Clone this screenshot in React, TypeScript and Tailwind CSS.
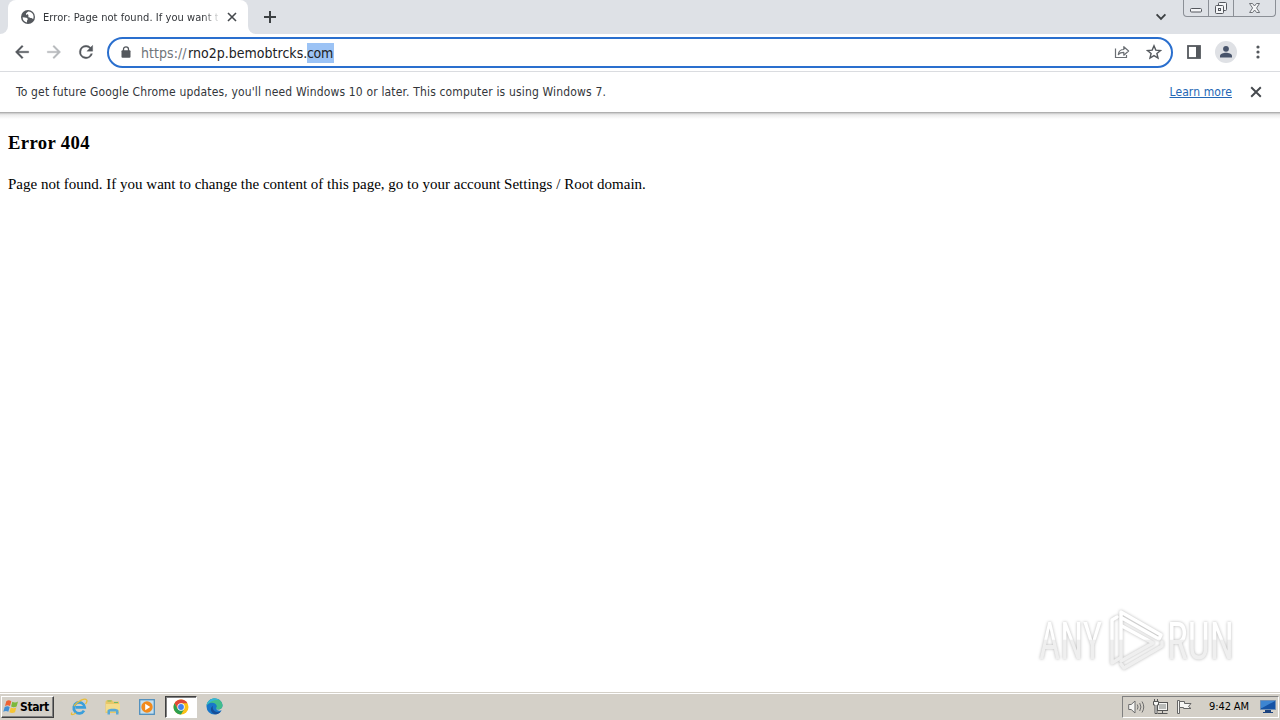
import type { ReactNode } from "react";

const TAHOMA = "font-['DejaVu_Sans_Condensed','DejaVu_Sans',sans-serif] [font-stretch:condensed]";

function GlobeIcon() {
  return (
    <svg width="16" height="16" viewBox="0 0 16 16" className="shrink-0">
      <circle cx="8" cy="8" r="7" fill="#54585d" />
      <path d="M2.6 8.2 5 8.6c1 .2 2.5.2 2.7 1.3.2 1-.7 1.2-.7 2.2v1.3A5.6 5.6 0 0 1 2.6 8.2Z" fill="#fff" />
      <path d="M8.2 2.5c2.5 0 4.3 1.4 5 3.3.6 1.5.4 3.2 0 4.2-.8-.2-1-.8-1.8-1-1.1-.2-2.2.2-2.8-.7-.6-1 .2-2-.4-2.5-.7-.4-2 .1-2.2-.7-.3-.9 1-1.2 2.2-2.6Z" fill="#fff" />
    </svg>
  );
}

function CloseIcon({ size }: { size: number }) {
  return (
    <svg width={size} height={size} viewBox="0 0 10 10" className="shrink-0" stroke="#45494d" strokeWidth="1.6">
      <path d="M1 1l8 8M9 1l-8 8" />
    </svg>
  );
}

function WindowControls() {
  return (
    <div className="flex h-[17px] w-[93px] shrink-0 rounded-b-[4px] border border-t-0 border-[#8b8f96] bg-[#dee1e6]">
      <div className="w-[25px] border-r border-[#8b8f96]">
        <svg width="24" height="16" viewBox="0 0 24 16" fill="#f4f5f7" stroke="#54575d">
          <rect x="6.5" y="8.5" width="11" height="3.5" rx="1" />
        </svg>
      </div>
      <div className="w-[25px] border-r border-[#8b8f96]">
        <svg width="24" height="16" viewBox="0 0 24 16" fill="#f4f5f7" stroke="#54575d">
          <rect x="9.5" y="2.5" width="8" height="8" rx="1" />
          <rect x="6.5" y="5.5" width="8" height="8" rx="1" />
          <rect x="9.5" y="8.5" width="2" height="2" />
        </svg>
      </div>
      <svg width="41" height="16" viewBox="0 0 41 16" fill="#f4f5f7" stroke="#62656b" strokeWidth=".9">
        <path d="M15.5 3.5h3l2 2.5 2-2.5h3L22.6 8l3 4.5h-3l-2-2.5-2 2.5h-3l3-4.5Z" />
      </svg>
    </div>
  );
}

function TabStrip() {
  return (
    <div className="flex h-[34px] bg-[#dee1e6]">
      <div className="flex w-2 items-end bg-white">
        <div className="h-[34px] w-2 rounded-br-[8px] bg-[#dee1e6]" />
      </div>
      <div className="flex h-[34px] w-[240px] items-center rounded-t-[8px] bg-white pl-3">
        <GlobeIcon />
        <div className="ml-[7px] w-[175px] overflow-hidden pt-px text-[11px] leading-[16px] whitespace-nowrap text-[#33363a] [mask-image:linear-gradient(to_right,black_160px,transparent_178px)]">
          <span className="tracking-[0.06px]">Error: Page not found. If you want t</span>
        </div>
        <div className="ml-[9px] flex">
          <CloseIcon size={10} />
        </div>
      </div>
      <div className="w-2 bg-white">
        <div className="h-[34px] w-2 rounded-bl-[8px] bg-[#dee1e6]" />
      </div>
      <svg width="12" height="12" viewBox="0 0 12 12" className="mt-[11px] ml-2" stroke="#3c4043" strokeWidth="2">
        <path d="M6 0v12M0 6h12" />
      </svg>
      <div className="flex-1" />
      <svg width="12" height="8" viewBox="0 0 12 8" className="mt-[13px] mr-4" fill="none" stroke="#3c4043" strokeWidth="1.9">
        <path d="m1.6 1.4 4.4 4.4 4.4-4.4" />
      </svg>
      <WindowControls />
      <div className="w-1" />
    </div>
  );
}

function ToolbarIcon({ d, color = "#54585d", className = "" }: { d: string; color?: string; className?: string }) {
  return (
    <svg
      width="20"
      height="20"
      viewBox="0 0 24 24"
      fill={color}
      stroke={color}
      strokeWidth=".4"
      className={`mb-px shrink-0 ${className}`}
    >
      <path d={d} />
    </svg>
  );
}

function Omnibox() {
  return (
    <div className="ml-[11px] flex h-[31px] w-[1066px] items-center rounded-full border-2 border-[#2a6fce] bg-white">
      <svg width="10" height="12" viewBox="0 0 10 12" className="mb-px ml-3">
        <path d="M2.5 5V3.3a2.5 2.5 0 0 1 5 0V5" fill="none" stroke="#54585d" strokeWidth="1.3" />
        <rect x=".5" y="4.3" width="9" height="7.4" rx="1" fill="#54585d" />
      </svg>
      <div className="ml-[10px] flex h-5 text-[14px] leading-[20px] whitespace-nowrap text-[#202124]">
        <span className="w-[47px] tracking-[0.05px] text-[#70757a]">https://</span>
        <span className="w-[119px] tracking-[0.02px]">rno2p.bemobtrcks.</span>
        <span className="w-[27px] bg-[#9cc3f5] tracking-[-0.3px]">com</span>
      </div>
      <div className="flex-1" />
      <svg width="16" height="16" viewBox="0 0 16 16" className="mr-4 mb-px" fill="none" stroke="#6b6f74" strokeWidth="1.2">
        <path d="M1.5 4.5v9h11V11" />
        <path d="M4.3 10.5c.4-3.2 2.2-5 5.5-5V2.7l4.8 4.3-4.8 4.2V8.4c-2.6 0-4.2.5-5.5 2.1Z" strokeLinejoin="round" />
      </svg>
      <svg width="16" height="16" viewBox="0 0 16 16" className="mr-[9px] mb-px" fill="none" stroke="#54585d" strokeWidth="1.4">
        <path d="m8 1.8 1.8 4.3 4.7.4-3.6 3 1.1 4.6L8 11.6l-4 2.5 1.1-4.6-3.6-3 4.7-.4Z" />
      </svg>
    </div>
  );
}

function Toolbar() {
  return (
    <div className="flex h-[38px] items-center border-b border-[#dadce0] bg-white pl-3">
      <ToolbarIcon d="M20 11H7.83l5.59-5.59L12 4l-8 8 8 8 1.41-1.41L7.83 13H20v-2z" />
      <ToolbarIcon d="m12 4-1.41 1.41L16.17 11H4v2h12.17l-5.58 5.59L12 20l8-8z" color="#b6b9bc" className="ml-3" />
      <ToolbarIcon
        d="M17.65 6.35A7.96 7.96 0 0 0 12 4a8 8 0 1 0 7.73 10h-2.08A6 6 0 1 1 12 6c1.66 0 3.14.69 4.22 1.78L13 11h7V4l-2.35 2.35z"
        className="ml-3"
      />
      <Omnibox />
      <svg width="14" height="14" viewBox="0 0 14 14" className="mb-px ml-[14px]">
        <rect x="1" y="1" width="12" height="12" fill="none" stroke="#54585d" strokeWidth="1.8" />
        <rect x="9" y="1" width="4" height="12" fill="#54585d" />
      </svg>
      <svg width="22" height="22" viewBox="0 0 22 22" className="mb-px ml-[14px]">
        <circle cx="11" cy="11" r="11" fill="#dfe1e5" />
        <circle cx="11" cy="7.8" r="2.9" fill="#48546b" />
        <path d="M5 16.5v-1.4c0-2.2 3.5-3.3 6-3.3s6 1.1 6 3.3v1.4Z" fill="#48546b" />
      </svg>
      <svg width="4" height="14" viewBox="0 0 4 14" className="mb-px ml-[19px]" fill="#54585d">
        <circle cx="2" cy="2" r="1.6" />
        <circle cx="2" cy="7" r="1.6" />
        <circle cx="2" cy="12" r="1.6" />
      </svg>
    </div>
  );
}

function InfoBar() {
  return (
    <div className="flex h-10 items-center bg-white pr-[18px] pl-4 text-[12px] leading-[16px] whitespace-nowrap text-[#33363a]">
      <span className="tracking-[0.16px]">
        To get future Google Chrome updates, you'll need Windows 10 or later. This computer is using Windows 7.
      </span>
      <div className="flex-1" />
      <a className="mr-[18px] tracking-[0.1px] text-[#2467b5] underline">Learn more</a>
      <CloseIcon size={12} />
    </div>
  );
}

function Watermark() {
  return (
    <svg
      width="210"
      height="72"
      viewBox="0 0 210 72"
      className="absolute top-[492px] left-[1033px] overflow-visible [filter:drop-shadow(0_0_1.5px_#b8b8b8)]"
    >
      <defs>
        <linearGradient id="mark" x1="0" y1="0" x2="0" y2="72" gradientUnits="userSpaceOnUse">
          <stop offset=".49" stopColor="#ffffff" />
          <stop offset=".5" stopColor="#efefef" />
        </linearGradient>
      </defs>
      <g fill="url(#mark)" fontFamily="Roboto, sans-serif" fontSize="51" fontWeight="400">
        <text x="6" y="55" textLength="63" lengthAdjust="spacingAndGlyphs">ANY</text>
        <text x="134" y="55" textLength="67" lengthAdjust="spacingAndGlyphs">RUN</text>
      </g>
      <g fill="none" stroke="url(#mark)" strokeWidth="3.5" strokeLinejoin="round" strokeLinecap="round">
        <path d="M84 13 79 16v43l8-5" />
        <path d="M88 54V8l40 23-2 4-37-21" />
        <path d="M89 22l31 17-32 18" />
        <path d="M129 38v4L91 64l-3-4" />
      </g>
    </svg>
  );
}

function StartButton() {
  return (
    <button className="ml-px flex h-[22px] w-[53px] items-center border border-t-white border-r-[#404040] border-b-[#404040] border-l-white bg-[#d4d0c8] pl-px shadow-[inset_-1px_-1px_0_#808080]">
      <svg width="17" height="17" viewBox="0 0 17 17" className="shrink-0">
        <path d="M3.3 3.2c2-1.3 3.3-1 5 0L7 8C5.3 7 4 7 2 8Z" fill="#ee6334" />
        <path d="M9.3 3.7c1.9 1 3.6 1 5.7-.1l-1.4 4.9c-2 1-3.8 1-5.5 0Z" fill="#7cb83c" />
        <path d="M1.7 9c2-1.2 3.5-1 5 0l-1.4 4.8c-1.6-1-3.1-1-5 0Z" fill="#418fd5" />
        <path d="M7.8 9.5c1.9 1 3.6.9 5.5 0l-1.3 4.7c-2 1.1-4 1-5.6 0Z" fill="#f6c535" />
      </svg>
      <span className="text-[12px] leading-[16px] font-bold tracking-[-0.4px] text-black">Start</span>
    </button>
  );
}

function TaskItem({ children, active = false }: { children: ReactNode; active?: boolean }) {
  if (active) {
    return (
      <div className="flex h-[22px] w-[32px] items-center justify-center border border-t-[#404040] border-r-white border-b-white border-l-[#404040] bg-white shadow-[inset_1px_1px_0_#808080]">
        {children}
      </div>
    );
  }
  return <div className="flex h-[22px] w-[32px] items-center justify-center">{children}</div>;
}

function ExplorerE() {
  return (
    <svg width="18" height="18" viewBox="0 0 18 18" fill="none">
      <path d="M14 12.6a5.5 5.5 0 1 1 .7-3.3H5.5" stroke="#3b9fdb" strokeWidth="2.7" />
      <path d="M2 14.5C0 17.500 3 17 6 15M4 8c4-5 11-8.500 12.700-6 .7 1-.2 2.700-1.200 4" stroke="#e8bd39" strokeWidth="1.3" />
    </svg>
  );
}

function FolderIcon() {
  return (
    <svg width="18" height="18" viewBox="0 0 18 18">
      <path d="M1.5 3.5 3 2h5l1 1.5h6V15h-13.5Z" fill="#e9c766" />
      <path d="M3.5 3h4M10 4.5h4" stroke="#72b967" strokeWidth="1.2" />
      <path d="M2 6h14v7.5H2Z" fill="#f3dc8b" />
      <path d="M3.5 16.5v-4c0-2.5 11-2.5 11 0v4H12v-3H6v3Z" fill="#58a9d6" />
    </svg>
  );
}

function MediaIcon() {
  return (
    <svg width="16" height="16" viewBox="0 0 16 16">
      <rect x=".7" y=".7" width="14.6" height="14.6" fill="#c5dfef" stroke="#4f8fbe" strokeWidth="1.3" />
      <circle cx="8" cy="8" r="5.7" fill="#f28a1c" />
      <path d="m6.2 4.7 5 3.3-5 3.3Z" fill="#fff" />
    </svg>
  );
}

function ChromeIcon() {
  return (
    <svg width="16" height="16" viewBox="0 0 16 16">
      <circle cx="8" cy="8" r="7.5" fill="#fbc116" />
      <path d="M8 8 4.7 9.9 1.5 4.3A7.5 7.5 0 0 1 14.5 4.3H8Z" fill="#df4939" />
      <path d="M1.5 4.3A7.5 7.5 0 0 0 8 15.5l3.2-5.6H4.7Z" fill="#2b9f50" />
      <circle cx="8" cy="8" r="3.7" fill="#fff" />
      <circle cx="8" cy="8" r="2.9" fill="#4382ed" />
    </svg>
  );
}

function EdgeIcon() {
  return (
    <svg width="17" height="17" viewBox="0 0 17 17" className="mr-[2px]">
      <path d="M.5 8.5C.5 4 4 .5 8.5.5c5 0 8 3.6 8 7 0 2.7-2 4-4.2 4-1 0-1.8-.3-2.1-.7.8 1.7 2.9 2.3 5.5 1.5-1.3 2.5-4 4.2-7.2 4.2a8 8 0 0 1-8-8Z" fill="#1876c9" />
      <path d="M.6 7.5C1.4 2.9 5 .5 8.5.5c5 0 8 3.6 8 7 0 2.7-2 4-4.2 4-1.3 0-2.4-.5-2.3-1.2.1-.6.8-.8.8-2C10.8 6 8.3 4.5 5.7 4.7 3.3 4.9 1.6 6 .6 7.5Z" fill="#42bd8b" />
      <path d="M.6 7.5C1.4 2.9 5 .5 8.5.5c2 0 3.6.6 4.9 1.6-5.4-.3-9.6 1-12.8 5.4Z" fill="#35b6d8" />
      <path d="M7 7.8c-1.5 4.4 3.2 7.3 7.7 5.6-2.9 4.5-8.8 3-9.7-1-.4-1.9.4-3.7 2-4.6Z" fill="#174e98" />
    </svg>
  );
}

function Tray() {
  return (
    <div className="flex h-[22px] w-[157px] items-center border border-t-[#808080] border-r-white border-b-white border-l-[#808080] pl-[5px]">
      <svg width="17" height="16" viewBox="0 0 17 16" fill="#f6f6f4" stroke="#6c6c6c">
        <path d="M.7 5.5h2.5L7 2v12l-3.8-3.5H.7Z" />
        <path d="M9.3 5.5q1.5 2.5 0 5M11.7 4q2.5 4 0 8M14 2.5q3.5 5.5 0 11" fill="none" />
      </svg>
      <svg width="17" height="16" viewBox="0 0 17 16" className="ml-[7px]" fill="#f6f6f4" stroke="#555">
        <rect x="5.5" y="3.5" width="10" height="8" />
        <rect x="7" y="5" width="7" height="5" fill="#b9bbb9" stroke="none" />
        <path d="M10.5 11.5v3M5.500 14.500h10" />
        <path d="M1.5 2.5h5V6H5v8.5H3V6H1.5ZM2.5 0v2M5.5 0v2" />
      </svg>
      <svg width="17" height="16" viewBox="0 0 17 16" className="ml-[7px]" fill="#f6f6f4" stroke="#666">
        <path d="M1.5 1.5h2v13h-2Z" />
        <path d="M3.5 2.5h5v2h6.5l-2.5 3 2.5 2H7.5v-1h-4Z" />
      </svg>
      <span className="ml-[16px] w-[44px] text-[11px] leading-[14px] tracking-[-0.1px] whitespace-nowrap text-black">9:42 AM</span>
      <svg width="16" height="15" viewBox="0 0 16 15" className="ml-[7px] shrink-0">
        <path d="M.5 1.5h15v9H.5Z" fill="#1553a5" stroke="#7190b5" />
        <path d="M1 2h14L2 9H1Z" fill="#3d85d1" />
        <path d="M5 11h6v2h2v1H3v-1h2Z" fill="#1b437e" />
      </svg>
    </div>
  );
}

function Taskbar() {
  return (
    <div className="flex h-[28px] items-center border-t border-[#d4d0c8] bg-[#d4d0c8] shadow-[inset_0_1px_0_#fff]">
      <StartButton />
      <div className="ml-[9px] flex gap-[2px]">
        <TaskItem><ExplorerE /></TaskItem>
        <TaskItem><FolderIcon /></TaskItem>
        <TaskItem><MediaIcon /></TaskItem>
        <TaskItem active><ChromeIcon /></TaskItem>
        <TaskItem><EdgeIcon /></TaskItem>
      </div>
      <div className="flex-1" />
      <Tray />
      <div className="w-px" />
    </div>
  );
}

export default function App() {
  return (
    <div className={`flex h-[720px] w-[1280px] flex-col overflow-hidden bg-white ${TAHOMA}`}>
      <TabStrip />
      <Toolbar />
      <InfoBar />
      <main className="relative flex-1 px-2 font-['Liberation_Serif',serif] text-black">
        <div className="-mx-2 h-[7px] border-t border-[#b0b0b0] bg-linear-to-b from-[#c4c4c4] via-[#ececec] via-30% to-white" />
        <h3 className="mt-[13px] text-[18.72px] leading-[22px] font-bold tracking-[0.35px]">Error 404</h3>
        <p className="mt-[20px] pt-px text-[15px] leading-[18px]">
          Page not found. If you want to change the content of this page, go to your account Settings / Root domain.
        </p>
        <Watermark />
      </main>
      <Taskbar />
    </div>
  );
}
